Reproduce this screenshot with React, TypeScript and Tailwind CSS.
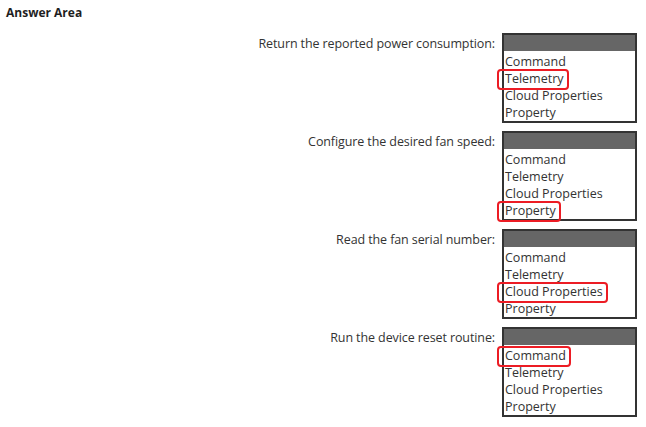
const rows = [
  { label: 'Return the reported power consumption:', answer: 'Telemetry' },
  { label: 'Configure the desired fan speed:', answer: 'Property' },
  { label: 'Read the fan serial number:', answer: 'Cloud Properties' },
  { label: 'Run the device reset routine:', answer: 'Command' },
];

const options = ['Command', 'Telemetry', 'Cloud Properties', 'Property'];

function AnswerBox({ answer }: { answer: string }) {
  return (
    <div className="w-[135px] h-[90px] border-2 border-[#333333] bg-white">
      <div className="h-[16px] bg-[#666666]" />
      <ul className="pl-[1px] pt-[2px]">
        {options.map((opt) => (
          <li key={opt} className="h-[17px] leading-[17px]">
            <span className="relative inline-block">
              {opt}
              {opt === answer && (
                <span className="absolute -left-[8px] -right-[5px] -top-[1px] -bottom-[3px] border-2 border-[#ec1c24] rounded-[4px]" />
              )}
            </span>
          </li>
        ))}
      </ul>
    </div>
  );
}

export default function App() {
  return (
    <div
      className="w-[646px] h-[427px] bg-white text-[#333333] text-[12.5px] pt-[4px]"
      style={{ fontFamily: '"Open Sans", "Liberation Sans", sans-serif' }}
    >
      <h1 className="pl-[6px] h-[18px] leading-[18px] font-bold text-[12px] text-[#1f1f1f]">Answer Area</h1>
      <div className="mt-[11px] flex flex-col gap-[8px]">
        {rows.map((row) => (
          <div key={row.label} className="flex">
            <div className="w-[496px] pr-[1px] pt-[2px] text-right h-[18px] leading-[18px] tracking-[-0.1px]">
              {row.label}
            </div>
            <div className="ml-[6px]">
              <AnswerBox answer={row.answer} />
            </div>
          </div>
        ))}
      </div>
    </div>
  );
}
